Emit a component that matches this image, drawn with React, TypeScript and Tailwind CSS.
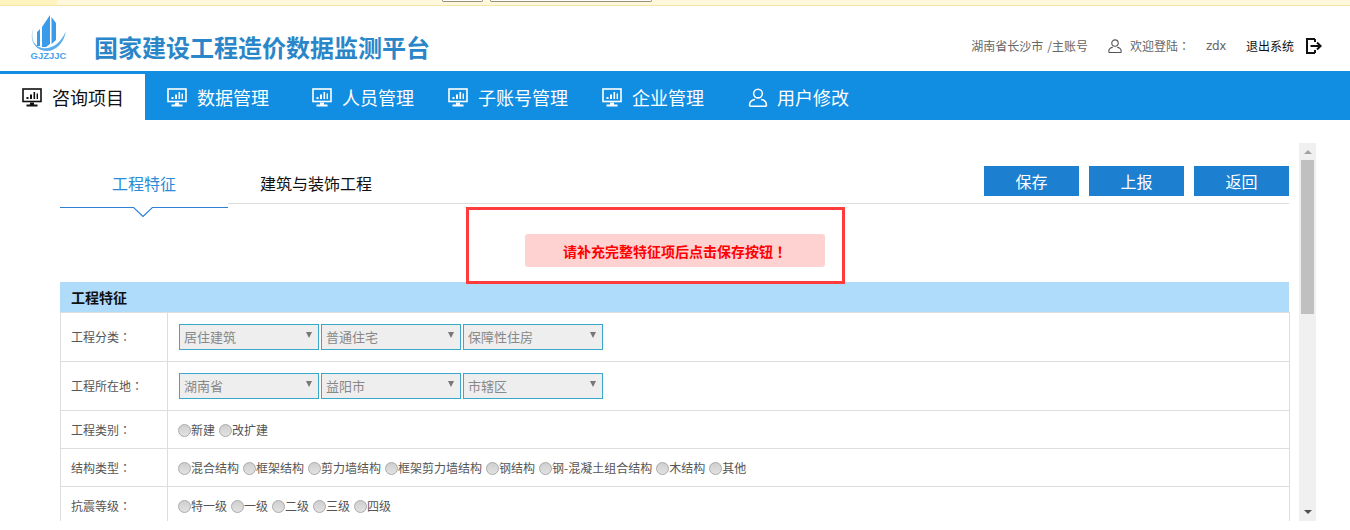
import type { ReactNode } from "react";

const NAV_ITEMS = [
  { label: "数据管理", icon: "monitor", width: "w-[145px]" },
  { label: "人员管理", icon: "monitor", width: "w-[136px]" },
  { label: "子账号管理", icon: "monitor", width: "w-[154px]" },
  { label: "企业管理", icon: "monitor", width: "w-[146px]" },
  { label: "用户修改", icon: "user", width: "w-[150px]" },
];

const ROWS = [
  { label: "工程类别", options: ["新建", "改扩建"] },
  {
    label: "结构类型",
    options: ["混合结构", "框架结构", "剪力墙结构", "框架剪力墙结构", "钢结构", "钢-混凝土组合结构", "木结构", "其他"],
  },
  { label: "抗震等级", options: ["特一级", "一级", "二级", "三级", "四级"] },
];

// the TC face centres full-width punctuation, as the reference does
function Punct({ children }: { children: string }) {
  return <span className="font-['Noto_Sans_CJK_TC',sans-serif]">{children}</span>;
}

function MonitorIcon({ className }: { className?: string }) {
  return (
    <svg viewBox="0 0 20 19" fill="none" className={className}>
      <rect x="1" y="1" width="18" height="12.5" stroke="currentColor" strokeWidth="1.6" />
      <path d="M4.5 11h2V9h-2zM8 11h2V6.5H8zM11.5 11h1.6V4h-1.6zM14.6 11h1.4V5.5h-1.4z" fill="currentColor" />
      <path d="M8 14.5h4v2H8zM4.5 16.6h11V18.4h-11z" fill="currentColor" />
    </svg>
  );
}

function UserIcon({ className }: { className?: string }) {
  return (
    <svg viewBox="0 0 20 20" fill="none" stroke="currentColor" strokeWidth="1.6" className={className}>
      <circle cx="10" cy="5.8" r="4.6" />
      <path d="M1.2 19.2v-2c0-3 3-5 5.6-5.2M18.8 19.2v-2c0-3-3-5-5.6-5.2M1.2 19.2h17.6" />
    </svg>
  );
}

function LogoutIcon() {
  return (
    <svg viewBox="0 0 16 16" fill="none" stroke="currentColor" strokeWidth="2" className="ml-3 mt-[-1px] h-4 w-4 text-[#111]">
      <path d="M9 1H1v14h8M9 1v3M9 12v3" />
      <path d="M4.5 8h10M11 4.6 14.6 8 11 11.4" />
    </svg>
  );
}

function Logo() {
  return (
    <div className="mt-[9px] ml-[30px] flex w-[37px] flex-col items-center">
      <svg viewBox="0 0 37 37" className="h-[37px] w-[37px]">
        <path d="M12 12 20 0v29l-4 3h-4zM21.5 2 26 8v17l-4.5 4zM7 17l3-3v17H7z" fill="#3a9bea" />
        <path d="M4 13C0 22 3 31 12 33c9 2 19-5 24-17-2 12-10 20-19 20C5 36-2 24 4 13z" fill="#5aaeee" />
      </svg>
      <span className="mt-[-1px] text-[9.5px] leading-[9px] font-bold whitespace-nowrap text-[#4aa3ea] font-['Liberation_Sans',sans-serif]">
        GJZJJC
      </span>
    </div>
  );
}

function Select({ value }: { value: string }) {
  return (
    <div className="flex h-[26px] w-[140px] items-center justify-between border border-[#39a9c9] bg-[#eeeeee] pr-[6px] pl-[4px] text-[13px] leading-[24px] text-[#888]">
      <span>{value}</span>
      <span className="mt-[-5px] h-0 w-0 border-x-[3px] border-t-[6px] border-x-transparent border-t-[#777]" />
    </div>
  );
}

function Radio({ label }: { label: string }) {
  return (
    <span className="flex items-center">
      <span className="mt-px h-[13px] w-[13px] rounded-full border border-[#aaa] bg-gradient-to-b from-[#cfcfcf] to-[#e2e2e2]" />
      <span>{label}</span>
    </span>
  );
}

function Row({ label, height, children }: { label: string; height: string; children: ReactNode }) {
  return (
    <div className={`flex border-b border-[#ddd] ${height}`}>
      <div className="flex w-[107px] shrink-0 items-center border-r border-[#ddd] pl-[10px] text-xs text-[#555]">
        {label}
        <Punct>：</Punct>
      </div>
      <div className="flex flex-1 items-center gap-1 pl-[10px] text-xs text-[#555]">{children}</div>
    </div>
  );
}

export default function App() {
  return (
    <div className="h-[530px] w-[1350px] overflow-hidden bg-white font-['Noto_Sans_CJK_SC','Liberation_Sans',sans-serif]">
      <div className="flex h-[6px] items-start border-b border-[#f5e6a8] bg-[#fff8dc]">
        <div className="h-[5px] w-[57px] bg-[#fff3bf]" />
        <div className="ml-[385px] h-[2px] w-[41px] rounded-b-sm border-x border-b border-[#9a8f78] bg-white" />
        <div className="ml-[7px] h-[2px] w-[162px] rounded-b-sm border-x border-b border-[#9a8f78] bg-white" />
      </div>

      <header className="flex h-[65px] items-start">
        <Logo />
        <h1 className="mt-[24px] ml-[27px] text-2xl leading-[34px] font-bold text-[#2a86c8]">国家建设工程造价数据监测平台</h1>
        <div className="mt-[32px] mr-[28px] ml-auto flex items-center text-xs leading-4 text-[#666]">
          <span className="mr-[4px]">湖南省长沙市</span>
          <span>/主账号</span>
          <UserIcon className="mt-[-1px] ml-5 h-4 w-[14px] text-[#555]" />
          <span className="ml-2">
            欢迎登陆<Punct>：</Punct>
          </span>
          <span className="ml-4 w-5 text-xs tracking-[-0.3px] font-['DejaVu_Sans',sans-serif]">zdx</span>
          <span className="ml-5 text-[#111]">退出系统</span>
          <LogoutIcon />
        </div>
      </header>

      <nav className="flex h-[49px] items-end bg-[#118ee2]">
        <div className="flex h-[46px] w-[145px] items-center bg-white pl-[22px] text-[#111]">
          <MonitorIcon className="h-[19px] w-5" />
          <span className="mt-[-1px] ml-[10px] text-lg leading-6">咨询项目</span>
        </div>
        {NAV_ITEMS.map((item) => (
          <div key={item.label} className={`flex h-[46px] items-center pl-[22px] text-white ${item.width}`}>
            {item.icon === "monitor" ? <MonitorIcon className="h-[19px] w-5" /> : <UserIcon className="h-[19px] w-5" />}
            <span className={`mt-[-1px] text-lg leading-6 ${item.icon === "monitor" ? "ml-[10px]" : "ml-[9px]"}`}>{item.label}</span>
          </div>
        ))}
      </nav>

      <main className="flex h-[401px] overflow-hidden">
        <div className="ml-[60px] w-[1229px] pt-[46px]">
          <div className="flex h-[38px] items-start border-b border-[#ddd]">
            <div className="relative z-10 h-[42px] w-[168px] border-b border-[#2f7fd6] bg-white text-center text-base leading-[34px] text-[#2a8bd8]">
              工程特征
              <svg viewBox="0 0 20 10" fill="none" className="absolute top-[41px] left-[73px] h-[10px] w-5">
                <path d="M0 0 10 9.5 20 0" fill="white" stroke="#2f7fd6" strokeWidth="1.2" />
              </svg>
            </div>
            <div className="ml-8 text-base leading-[34px] text-[#111]">建筑与装饰工程</div>
            <div className="ml-auto flex gap-[10px]">
              {["保存", "上报", "返回"].map((label) => (
                <button key={label} className="h-[30px] w-[95px] bg-[#1d7fcf] text-base leading-[30px] text-white">
                  {label}
                </button>
              ))}
            </div>
          </div>

          <div className="relative h-[78px] pt-[30px] pl-[465px]">
            <div className="flex h-[33px] w-[300px] items-center justify-center rounded-[3px] bg-[#ffd2d2] text-sm font-bold text-[#f00]">
              <span>
                请补充完整特征项后点击保存按钮<Punct>！</Punct>
              </span>
            </div>
            <div className="absolute top-[3px] left-[406px] z-10 h-[77px] w-[379px] border-[3px] border-[#ff3b3b]" />
          </div>

          <div className="flex h-[30px] items-center bg-[#b0dcfc] pb-px pl-[11px] text-sm font-bold text-[#111]">工程特征</div>

          <div className="mr-[-1px] border-x border-t border-[#ddd]">
            <Row label="工程分类" height="h-[49px]">
              <div className="ml-px flex gap-[2px]">
                {["居住建筑", "普通住宅", "保障性住房"].map((v) => (
                  <Select key={v} value={v} />
                ))}
              </div>
            </Row>
            <Row label="工程所在地" height="h-[49px]">
              <div className="ml-px flex gap-[2px]">
                {["湖南省", "益阳市", "市辖区"].map((v) => (
                  <Select key={v} value={v} />
                ))}
              </div>
            </Row>
            {ROWS.map((row) => (
              <Row key={row.label} label={row.label} height="h-[38px]">
                {row.options.map((o) => (
                  <Radio key={o} label={o} />
                ))}
              </Row>
            ))}
          </div>
        </div>

        <div className="mt-[23px] ml-[10px] flex h-[378px] w-[17px] flex-col items-center bg-[#f0f0f0]">
          <span className="mt-[7px] h-0 w-0 border-x-[4px] border-b-[4px] border-x-transparent border-b-[#a3a3a3]" />
          <div className="mt-[6px] h-[154px] w-[13px] bg-[#c0c0c0]" />
          <span className="mt-auto mb-[7px] h-0 w-0 border-x-[4px] border-t-[4px] border-x-transparent border-t-[#505050]" />
        </div>
      </main>
    </div>
  );
}
